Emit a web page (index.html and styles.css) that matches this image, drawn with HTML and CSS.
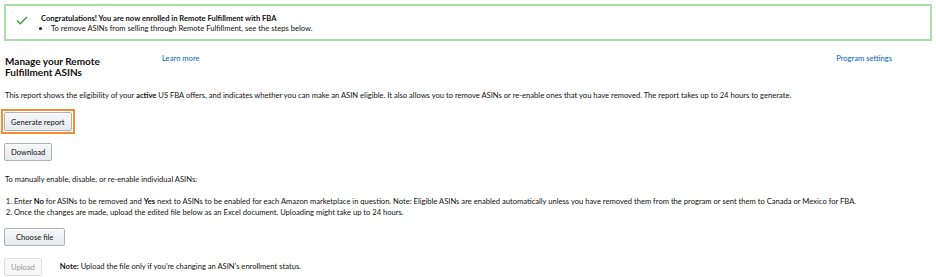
FILE: index.html
```html
<!DOCTYPE html>
<html lang="en">

<head>
    <meta charset="UTF-8">
    <title>Remote Fulfillment ASINs</title>
    <link rel="stylesheet" href="styles.css">
</head>

<body>

    <!-- Success alert -->
    <div class="alert">
        <svg class="alert-icon" width="12" height="9" viewBox="0 0 12 9">
            <path d="M1 4.5 L4.3 7.8 L11 1" fill="none" stroke="#3f9c35" stroke-width="1.4"/>
        </svg>
        <div class="alert-body">
            <div class="alert-title">Congratulations! You are now enrolled in Remote Fulfillment with FBA</div>
            <ul class="alert-list">
                <li>To remove ASINs from selling through Remote Fulfillment, see the steps below.</li>
            </ul>
        </div>
    </div>

    <div class="content">
        <div class="page-header">
            <h1 class="title">Manage your Remote Fulfillment ASINs</h1>
            <a class="link" href="#">Learn more</a>
            <a class="link settings" href="#">Program settings</a>
        </div>

        <p class="text intro">This report shows the eligibility of your <b>active</b> US FBA offers, and indicates whether you can make an ASIN eligible. It also allows you to remove ASINs or re-enable ones that you have removed. The report takes up to 24 hours to generate.</p>

        <div class="row focus-row">
            <span class="focus-ring"><button class="btn">Generate report</button></span>
        </div>
        <div class="row download-row">
            <button class="btn">Download</button>
        </div>

        <p class="text manual">To manually enable, disable, or re-enable individual ASINs:</p>

        <ol class="steps">
            <li>Enter <b>No</b> for ASINs to be removed and <b>Yes</b> next to ASINs to be enabled for each Amazon marketplace in question. Note: Eligible ASINs are enabled automatically unless you have removed them from the program or sent them to Canada or Mexico for FBA.</li>
            <li>Once the changes are made, upload the edited file below as an Excel document. Uploading might take up to 24 hours.</li>
        </ol>

        <div class="row choose-row">
            <button class="btn wide">Choose file</button>
        </div>
        <div class="row upload-row">
            <button class="btn" disabled>Upload</button>
            <span class="note"><b>Note:</b> Upload the file only if you're changing an ASIN's enrollment status.</span>
        </div>
    </div>

</body>

</html>
```

FILE: styles.css
```css
body {
    font-family: Lato, Arial, sans-serif;
    font-size: 7.6px;
    color: #111;
    margin: 0;
    padding: 0;
    background-color: #fff;
}

/* Success alert */
.alert {
    display: flex;
    align-items: flex-start;
    margin: 4px 4px 0 4px;
    height: 33px;
    border: 2px solid #a8dfa8;
    box-sizing: content-box;
}

.alert-icon {
    flex: none;
    margin: 10px 0 0 10px;
}

.alert-body {
    margin: 7px 0 0 13px;
}

.alert-title {
    font-weight: bold;
    line-height: 10px;
}

.alert-list {
    margin: 0;
    padding-left: 10px;
    line-height: 10px;
}

/* Main content */
.content {
    padding: 0 5px;
}

.page-header {
    display: flex;
    align-items: flex-start;
    margin-top: 12px;
}

.title {
    flex: none;
    font-size: 10px;
    font-weight: bold;
    line-height: 11px;
    margin: 3px 42px 0 0;
    width: 115px;
}

.link {
    color: #0066c0;
    text-decoration: none;
    line-height: 10px;
}

.settings {
    margin-left: auto;
    margin-right: 39px;
}

.text {
    margin: 0;
    line-height: 10px;
}

.intro {
    margin-top: 12px;
}

.manual {
    margin-top: 13px;
}

.row {
    display: flex;
    align-items: center;
    margin-left: -1px;
}

.focus-row {
    margin-top: 9px;
}

.focus-ring {
    display: inline-block;
    margin-left: -3px;
    padding: 1px;
    border: 2px solid #f68b33;
}

.download-row {
    margin-top: 9px;
}

.choose-row {
    margin-top: 10px;
}

.upload-row {
    margin-top: 12px;
}

.btn {
    font-family: inherit;
    font-size: 7.6px;
    color: #111;
    height: 18px;
    padding: 0 6px;
    border: 1px solid #adb1b8;
    border-radius: 2px;
    background: linear-gradient(#f7f8fa, #e7e9ec);
    box-shadow: 0 1px 0 rgba(255, 255, 255, 0.6) inset;
}

.focus-ring .btn {
    height: 19px;
}

.btn.wide {
    padding: 0 11px;
}

.btn:disabled {
    color: #999;
    background: #f7f7f7;
    border-color: #e0e0e0;
}

.steps {
    margin: 12px 0 0 0;
    padding-left: 9px;
    line-height: 11px;
}

.note {
    margin-left: 18px;
    margin-top: -2px;
}
```
